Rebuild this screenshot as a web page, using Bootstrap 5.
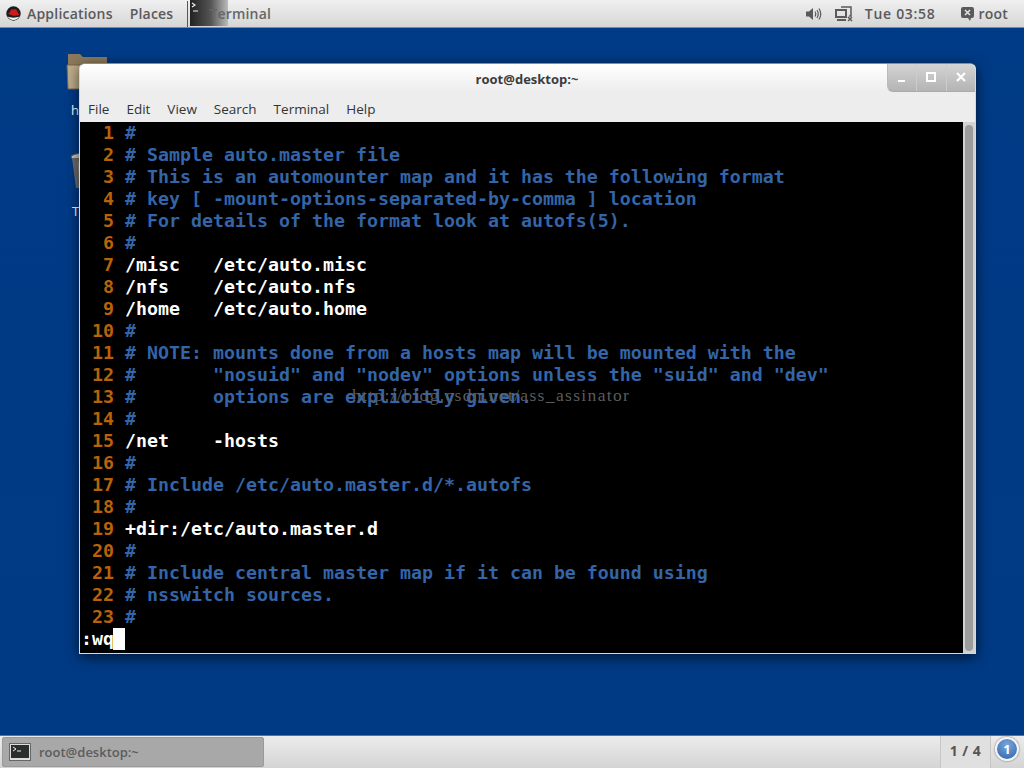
<!DOCTYPE html>
<html lang="en">
<head>
<meta charset="utf-8">
<title>root@desktop:~</title>
<link rel="stylesheet" href="https://cdn.jsdelivr.net/npm/bootstrap@5.3.0/dist/css/bootstrap.min.css">
<style>
html,body{height:768px;width:1024px;margin:0;overflow:hidden;background:#013a85}
.screen{width:1024px;height:768px;font-family:"Open Sans","Noto Sans",sans-serif}
.toppanel{height:28px;flex:none;background:linear-gradient(#f0f0f0,#d6d6d6);border-bottom:1px solid #8a8a8a;color:#5a5a5a;font-size:14px;font-weight:600;letter-spacing:.2px;line-height:27px}
.tp-logo{margin:0 6px 0 6px;width:15px;height:15px}
.tp-places{margin-left:17px}
.tp-sep{width:1px;height:26px;background:#555;margin-left:14px}
.tp-app{position:relative;margin-left:2px;width:82px;height:27px}
.tp-appicon{position:absolute;left:0;top:0;width:38px;height:26px;background:linear-gradient(90deg,#222,#555 55%,#bbb 100%)}
.tp-apptext{position:absolute;left:19px;top:0;color:#666}
.tp-right{margin-left:auto;margin-right:16px}
.desk{position:relative;flex:1 1 auto;background:linear-gradient(#003b87,#013a84)}
.deskicon{position:absolute;color:#fff;font-size:13px}
.term-win{position:absolute;left:79px;top:35px;width:897px;height:591px;border:1px solid #d8d8d8;border-top-color:#8b8b8b;border-radius:6px 6px 0 0;background:#ededed;box-shadow:0 3px 14px rgba(0,0,0,.65)}
.win-title{height:29px;flex:none;position:relative;background:linear-gradient(#fff,#ececec);border-radius:5px 5px 0 0;text-align:center;font-size:13px;font-weight:700;color:#3c3c3c;line-height:30px;padding-right:1px}
.win-btns{position:absolute;right:0;top:0;height:28px;width:88px;background:linear-gradient(#d4d4d4,#b4b4b4);border-radius:0 5px 0 6px;border-left:1px solid #bbb;border-bottom:1px solid #aaa}
.win-btn{flex:1;display:flex;align-items:center;justify-content:center;border-right:1px solid #ccc;padding-bottom:2px}
.win-btn:last-child{border-right:0}
.win-menu{height:29px;flex:none;font-size:13.5px;color:#333;line-height:32px;padding-left:8px;gap:17px}
.term-body{flex:1 1 auto;min-height:0;position:relative;background:#000;overflow:hidden}
.term-text{margin:0;padding:0 0 0 1px;font-family:"DejaVu Sans Mono",monospace;font-weight:700;font-size:18.27px;line-height:22px;color:#fff;white-space:pre;overflow:hidden}
.ln{color:#b8620a}.cm{color:#3465a8}
.cursor{display:inline-block;width:12px;height:22px;background:#fff;vertical-align:top;margin-left:-1px}
.watermark{position:absolute;left:272px;top:262px;font-family:"Liberation Serif",serif;font-size:17.5px;letter-spacing:1.35px;color:#5c5c5c;font-weight:400;line-height:22px;white-space:pre}
.term-scroll{width:12px;flex:none;background:#d2d2d2;position:relative}
.term-thumb{position:absolute;left:2px;right:2px;top:3px;bottom:2px;background:#9c9c9c;border-radius:5px}
.botpanel{height:33px;flex:none;background:linear-gradient(#ececec,#d4d4d4);border-top:1px solid #6f6f6f;color:#555}
.taskbtn{width:262px;height:30px;margin:1px 0 0 2px;background:#a8a8a8;border:1px solid #999;border-radius:2px;font-size:13px;font-weight:600;color:#5c5c5c;padding-left:6px;line-height:28px}
.wsp{margin-left:auto;width:51px;height:32px;background:#e0e0e0;border-left:1px solid #c6c6c6;border-right:1px solid #c6c6c6;text-align:center;font-size:14px;font-weight:700;line-height:30px;color:#555;letter-spacing:.5px}
.msgbadge{width:24px;height:24px;margin:1px 5px 0 4px;border-radius:50%;background:radial-gradient(circle at 50% 30%,#7aa6dc,#2f62a8);border:2px solid #f4f4f4;box-shadow:0 0 2px #555;color:#fff;font-size:13px;font-weight:700;text-align:center;line-height:20px}
</style>
</head>
<body>
<div class="screen d-flex flex-column">
  <div class="toppanel d-flex align-items-center">
    <svg class="tp-logo" viewBox="0 0 15 15"><circle cx="7.5" cy="7.5" r="7.2" fill="#1c1c1c"/><path d="M1.5 10.5a7 7 0 0 0 12 0c-3 1.5-9 1.5-12 0z" fill="#f2f2f2"/><path d="M2 7.5c.5-1 1.200-1 2-1 .3-2.500 1.500-3.500 3-3.200 1 .3 2.500-.3 3.300.5 1 1 1 2.500 2 3.500.7.700 1 1.300.5 1.800-2 .8-6 .8-8-.2-1-.4-2-.9-2.800-1.400z" fill="#cc1a1f"/></svg>
    <span>Applications</span>
    <span class="tp-places">Places</span>
    <span class="tp-sep"></span>
    <div class="tp-app">
      <span class="tp-appicon"><svg width="20" height="14" viewBox="0 0 20 14" class="d-block"><path d="M2 3l3 2-3 2M3 11h5" stroke="#eee" stroke-width="1.200" fill="none"/></svg></span>
      <span class="tp-apptext">Terminal</span>
    </div>
    <div class="tp-right d-flex align-items-center">
      <svg width="16" height="14" viewBox="0 0 16 14"><path d="M0 4.500h3l4-3.500v12l-4-3.500H0z" fill="#5a5a5a"/><path d="M9 4.500q1.500 2.500 0 5M11 3q2.500 4 0 8M13 1.500q3.500 5.500 0 11" stroke="#5a5a5a" stroke-width="1.200" fill="none"/></svg>
      <svg class="ms-2 me-2" style="margin-left:13px!important" width="18" height="16" viewBox="0 0 18 16"><path d="M6 1h10v9h-2" stroke="#5a5a5a" stroke-width="1.500" fill="none"/><rect x="1" y="4" width="10" height="7" fill="none" stroke="#5a5a5a" stroke-width="2"/><path d="M2 13h9v2H2z" fill="#5a5a5a"/><path d="M13 11l4 4m0-4l-4 4" stroke="#5a5a5a" stroke-width="1.500"/></svg>
      <span class="ms-1" style="letter-spacing:.7px">Tue 03:58</span>
      <svg style="margin-left:24px" width="15" height="16" viewBox="0 0 15 16"><path d="M3 1h9a2 2 0 0 1 2 2v7a2 2 0 0 1-2 2h-1l-1 3-2-3H3a2 2 0 0 1-2-2V3a2 2 0 0 1 2-2z" fill="#5a5a5a"/><path d="M5 4l5 5m0-5l-5 5" stroke="#e4e4e4" stroke-width="1.500"/></svg>
      <span class="ms-1">root</span>
    </div>
  </div>

  <div class="desk">
    <div class="deskicon" style="left:66px;top:24px">
      <svg width="44" height="40" viewBox="0 0 44 40" class="d-block"><path d="M2 2h12l3 3h24v10H2z" fill="#8d7a5c"/><path d="M1 13h40l1 24H2z" fill="#bfae8c" stroke="#75664b"/></svg>
      <span style="position:absolute;left:5px;top:49px">h</span>
    </div>
    <div class="deskicon" style="left:70px;top:124px">
      <svg width="32" height="40" viewBox="0 0 32 40" class="d-block"><ellipse cx="15" cy="5" rx="14" ry="4" fill="#c8c8c8" stroke="#555"/><path d="M2 6l4 30h18l4-30z" fill="#6f6f6f"/><path d="M8 9l2 26M14 9v26M20 9v26" stroke="#999"/></svg>
      <span style="position:absolute;left:2px;top:50px">T</span>
    </div>

    <div class="term-win d-flex flex-column">
      <div class="win-title">root@desktop:~
        <div class="win-btns d-flex">
          <div class="win-btn"><svg width="10" height="10" viewBox="0 0 10 10"><path d="M1 8h7v2H1z" fill="#fff"/></svg></div>
          <div class="win-btn"><svg width="10" height="10" viewBox="0 0 10 10"><path d="M1 1h8v8H1z" fill="none" stroke="#fff" stroke-width="2"/></svg></div>
          <div class="win-btn"><svg width="10" height="10" viewBox="0 0 10 10"><path d="M1 1l8 8m0-8l-8 8" stroke="#fff" stroke-width="2.200"/></svg></div>
        </div>
      </div>
      <div class="win-menu d-flex">
        <span>File</span><span>Edit</span><span>View</span><span>Search</span><span>Terminal</span><span>Help</span>
      </div>
      <div class="d-flex flex-grow-1" style="min-height:0">
        <div class="term-body">
<pre class="term-text"><span class="ln">  1 </span><span class="cm">#</span>
<span class="ln">  2 </span><span class="cm"># Sample auto.master file</span>
<span class="ln">  3 </span><span class="cm"># This is an automounter map and it has the following format</span>
<span class="ln">  4 </span><span class="cm"># key [ -mount-options-separated-by-comma ] location</span>
<span class="ln">  5 </span><span class="cm"># For details of the format look at autofs(5).</span>
<span class="ln">  6 </span><span class="cm">#</span>
<span class="ln">  7 </span>/misc   /etc/auto.misc
<span class="ln">  8 </span>/nfs    /etc/auto.nfs
<span class="ln">  9 </span>/home   /etc/auto.home
<span class="ln"> 10 </span><span class="cm">#</span>
<span class="ln"> 11 </span><span class="cm"># NOTE: mounts done from a hosts map will be mounted with the</span>
<span class="ln"> 12 </span><span class="cm">#       "nosuid" and "nodev" options unless the "suid" and "dev"</span>
<span class="ln"> 13 </span><span class="cm">#       options are explicitly given.</span>
<span class="ln"> 14 </span><span class="cm">#</span>
<span class="ln"> 15 </span>/net    -hosts
<span class="ln"> 16 </span><span class="cm">#</span>
<span class="ln"> 17 </span><span class="cm"># Include /etc/auto.master.d/*.autofs</span>
<span class="ln"> 18 </span><span class="cm">#</span>
<span class="ln"> 19 </span>+dir:/etc/auto.master.d
<span class="ln"> 20 </span><span class="cm">#</span>
<span class="ln"> 21 </span><span class="cm"># Include central master map if it can be found using</span>
<span class="ln"> 22 </span><span class="cm"># nsswitch sources.</span>
<span class="ln"> 23 </span><span class="cm">#</span>
:wq<span class="cursor"></span></pre>
          <div class="watermark">http://blog.csdn.net/ass_assinator</div>
        </div>
        <div class="term-scroll"><div class="term-thumb"></div></div>
      </div>
    </div>
  </div>

  <div class="botpanel d-flex">
    <div class="taskbtn d-flex align-items-center gap-2">
      <svg width="22" height="18" viewBox="0 0 22 18" class="flex-none"><rect x=".5" y=".5" width="21" height="17" fill="#ddd" stroke="#666"/><rect x="2" y="2" width="18" height="13" fill="#2a2e2c"/><path d="M4 4l3 2-3 2M8 8h4" stroke="#eee" fill="none"/></svg>
      <span>root@desktop:~</span>
    </div>
    <div class="wsp">1 / 4</div>
    <div class="msgbadge">1</div>
  </div>
</div>
</body>
</html>
